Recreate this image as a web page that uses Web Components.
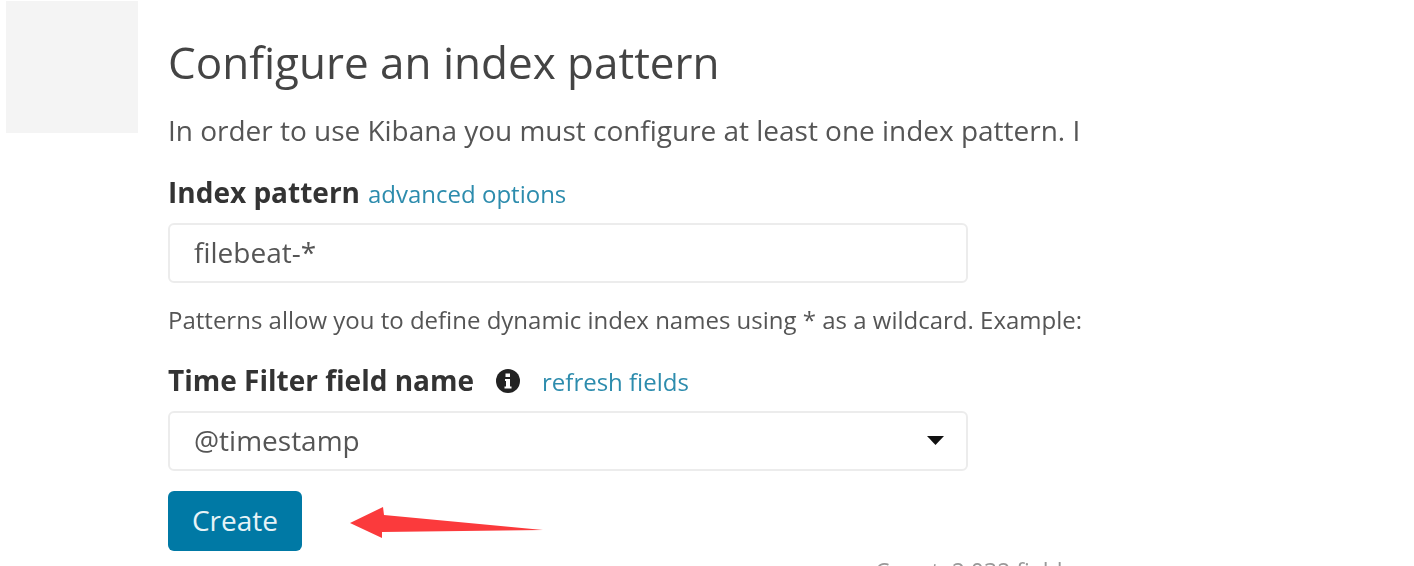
<!DOCTYPE html>
<html>
<head>
<meta charset="utf-8">
<title>Configure an index pattern</title>
<style>
  html, body { margin: 0; height: 100%; overflow: hidden; background: #fff; }
  body { font-family: "Open Sans", sans-serif; color: #444; }
</style>
</head>
<body>
<kbn-page>
  <kbn-index-form></kbn-index-form>
</kbn-page>

<script>
class KbnPage extends HTMLElement {
  constructor() {
    super();
    this.attachShadow({ mode: "open" });
    this.shadowRoot.innerHTML = `
      <style>
        :host { display: flex; height: 566px; overflow: hidden; padding: 1px 0 0 6px; box-sizing: border-box; }
        .logo { flex: none; width: 132px; height: 132px; background: #f4f4f4; }
        .main { flex: none; width: 914px; margin-left: 30px; overflow: hidden; }
      </style>
      <div class="logo"></div>
      <div class="main"><slot></slot></div>
    `;
  }
}

class KbnField extends HTMLElement {
  static get observedAttributes() { return ["value", "caret"]; }
  constructor() {
    super();
    this.attachShadow({ mode: "open" });
  }
  attributeChangedCallback() { this.render(); }
  connectedCallback() { this.render(); }
  render() {
    const value = this.getAttribute("value") || "";
    const caret = this.hasAttribute("caret");
    this.shadowRoot.innerHTML = `
      <style>
        :host { display: block; }
        .box {
          width: 800px; height: 60px; box-sizing: border-box;
          border: 2px solid #ececec; border-radius: 6px;
          padding: 0 22px 2px 24px; display: flex; align-items: center; justify-content: space-between;
          font-size: 28px; color: #555;
        }
        svg { display: block; }
      </style>
      <div class="box">
        <span>${value}</span>
        ${caret ? `<svg width="17" height="9" viewBox="0 0 17 9"><path d="M0 0h17l-8.500 9z" fill="#111"/></svg>` : ""}
      </div>
    `;
  }
}

class KbnIndexForm extends HTMLElement {
  constructor() {
    super();
    this.attachShadow({ mode: "open" });
    this.shadowRoot.innerHTML = `
      <style>
        /* the reference is a soft upscaled capture */
        :host { display: block; white-space: nowrap; filter: blur(.4px); }
        h1 { margin: 0; padding-top: 30px; font-size: 44px; line-height: 62px; font-weight: 400; color: #444; }
        p { margin: 0; }
        .intro { margin-top: 19px; font-size: 28px; line-height: 36px; color: #555; letter-spacing: -.02px; }
        .label { display: flex; align-items: baseline; font-size: 28px; line-height: 36px; font-weight: 700; color: #333; }
        .label a { font-size: 24px; font-weight: 400; color: #2d8cad; margin-left: 8px; text-decoration: none; }
        .first { margin-top: 26px; }
        .hint { margin-top: 19px; font-size: 24px; line-height: 36px; color: #555; }
        .second { margin-top: 24px; }
        .info { margin: 0 22px; display: block; align-self: center; }
        .label .info + a { margin-left: 0; }
        kbn-field { margin-top: 11px; }
        .row { display: flex; align-items: center; margin-top: 20px; }
        button {
          width: 134px; height: 60px; border: 0; border-radius: 6px; padding: 0 0 2px;
          background: #0079a5; color: #e6f3f7;
          font: 400 28px "Open Sans", sans-serif;
        }
        .arrow { display: block; margin: 4px 0 0 48px; }
        .cut { margin: 8px 0 0 707px; font-size: 23px; line-height: 24px; color: #999; }
      </style>
      <h1>Configure an index pattern</h1>
      <p class="intro">In order to use Kibana you must configure at least one index pattern. Index patterns are used to identify the Elasticsearch index</p>
      <div class="label first">Index pattern <a>advanced options</a></div>
      <kbn-field value="filebeat-*"></kbn-field>
      <p class="hint">Patterns allow you to define dynamic index names using * as a wildcard. Example: filebeat-*</p>
      <div class="label second">Time Filter field name
        <svg class="info" width="24" height="24" viewBox="0 0 24 24"><circle cx="12" cy="12" r="12" fill="#222"/><path d="M9.500 4.500h4.500v3.500h-4.500zM9 10h5v7.500h1.500v2h-7v-2h1.500v-5.500h-1z" fill="#fff"/></svg>
        <a>refresh fields</a>
      </div>
      <kbn-field value="@timestamp" caret></kbn-field>
      <div class="row">
        <button>Create</button>
        <svg class="arrow" width="194" height="32" viewBox="0 0 194 32"><path d="M0 16L33 0l1 8 159 15-161 2v6z" fill="#fb3a3c"/></svg>
      </div>
      <div class="cut">Count: 2,032 fields</div>
    `;
  }
}

customElements.define("kbn-page", KbnPage);
customElements.define("kbn-field", KbnField);
customElements.define("kbn-index-form", KbnIndexForm);
</script>
</body>
</html>
